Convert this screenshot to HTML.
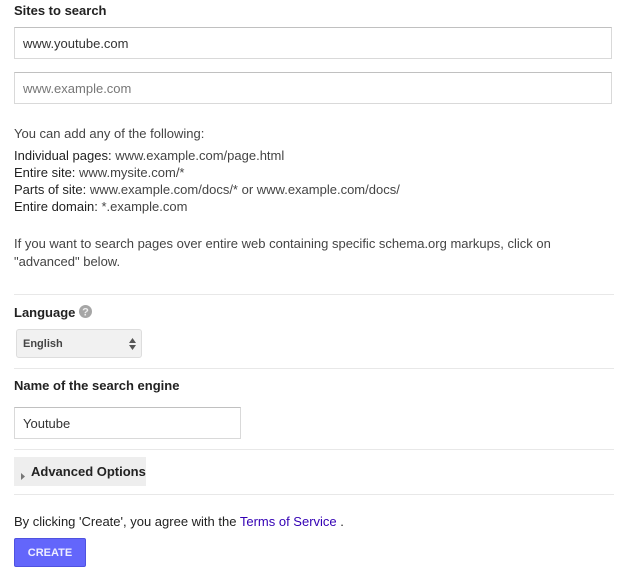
<!DOCTYPE html>
<html>
<head>
<meta charset="utf-8">
<style>
html,body{margin:0;padding:0;background:#fff;}
body{width:626px;height:569px;position:relative;overflow:hidden;font-family:"Liberation Sans",sans-serif;font-size:13px;color:#222;}
.a{position:absolute;white-space:nowrap;line-height:17px;}
.b{font-weight:bold;}
.g{color:#444;}
.input{position:absolute;box-sizing:border-box;background:#fff;border:1px solid #d9d9d9;border-top-color:#c0c0c0;padding-left:8px;font-size:13px;}
.hr{position:absolute;left:14px;width:600px;height:1px;background:#e8e8e8;}
</style>
</head>
<body>
<div class="a b" style="left:14px;top:2px;">Sites to search</div>
<div class="input" style="left:14px;top:27px;width:598px;height:32px;line-height:32px;color:#333;">www.youtube.com</div>
<div class="input" style="left:14px;top:72px;width:598px;height:32px;line-height:32px;color:#777;">www.example.com</div>

<div class="a g" style="left:14px;top:125px;">You can add any of the following:</div>
<div class="a" style="left:14px;top:147px;">Individual pages: <span class="g">www.example.com/page.html</span></div>
<div class="a" style="left:14px;top:164px;">Entire site: <span class="g">www.mysite.com/*</span></div>
<div class="a" style="left:14px;top:181px;">Parts of site: <span class="g">www.example.com/docs/* or www.example.com/docs/</span></div>
<div class="a" style="left:14px;top:198px;">Entire domain: <span class="g">*.example.com</span></div>
<div class="a g" style="left:14px;top:235px;">If you want to search pages over entire web containing specific schema.org markups, click on</div>
<div class="a g" style="left:14px;top:253px;">"advanced" below.</div>

<div class="hr" style="top:294px;"></div>
<div class="a b" style="left:14px;top:304px;">Language</div>
<svg style="position:absolute;left:79px;top:305px;" width="13" height="13" viewBox="0 0 13 13"><circle cx="6.5" cy="6.5" r="6.5" fill="#a6a6a6"/><text x="6.5" y="10.5" font-family="Liberation Sans" font-size="11" font-weight="bold" fill="#eee" text-anchor="middle">?</text></svg>
<div style="position:absolute;box-sizing:border-box;left:16px;top:329px;width:126px;height:29px;background:#f1f1f1;border:1px solid #ddd;border-radius:3px;"></div>
<div class="a b" style="left:23px;top:335px;font-size:11px;line-height:18px;color:#444;">English</div>
<svg style="position:absolute;left:129px;top:338px;" width="7" height="12" viewBox="0 0 7 12"><path d="M0 5L3.5 0L7 5Z M0 7L3.5 12L7 7Z" fill="#555"/></svg>

<div class="hr" style="top:368px;"></div>
<div class="a b" style="left:14px;top:377px;">Name of the search engine</div>
<div class="input" style="left:14px;top:407px;width:227px;height:32px;line-height:32px;color:#333;">Youtube</div>

<div class="hr" style="top:449px;"></div>
<div style="position:absolute;left:14px;top:457px;width:132px;height:29px;background:#eee;"></div>
<svg style="position:absolute;left:21px;top:473px;" width="4" height="7" viewBox="0 0 4 7"><path d="M0 0L4 3.5L0 7Z" fill="#777"/></svg>
<div class="a b" style="left:31px;top:463px;font-size:13px;">Advanced Options</div>
<div class="hr" style="top:494px;"></div>

<div class="a" style="left:14px;top:513px;">By clicking 'Create', you agree with the <span style="color:#3300b4;">Terms of Service</span> .</div>
<div style="position:absolute;box-sizing:border-box;left:14px;top:538px;width:72px;height:29px;background:#6366fb;border:1px solid #4f52e0;border-radius:2px;color:#eef;font-weight:bold;font-size:11px;text-align:center;line-height:28px;">CREATE</div>
</body>
</html>
